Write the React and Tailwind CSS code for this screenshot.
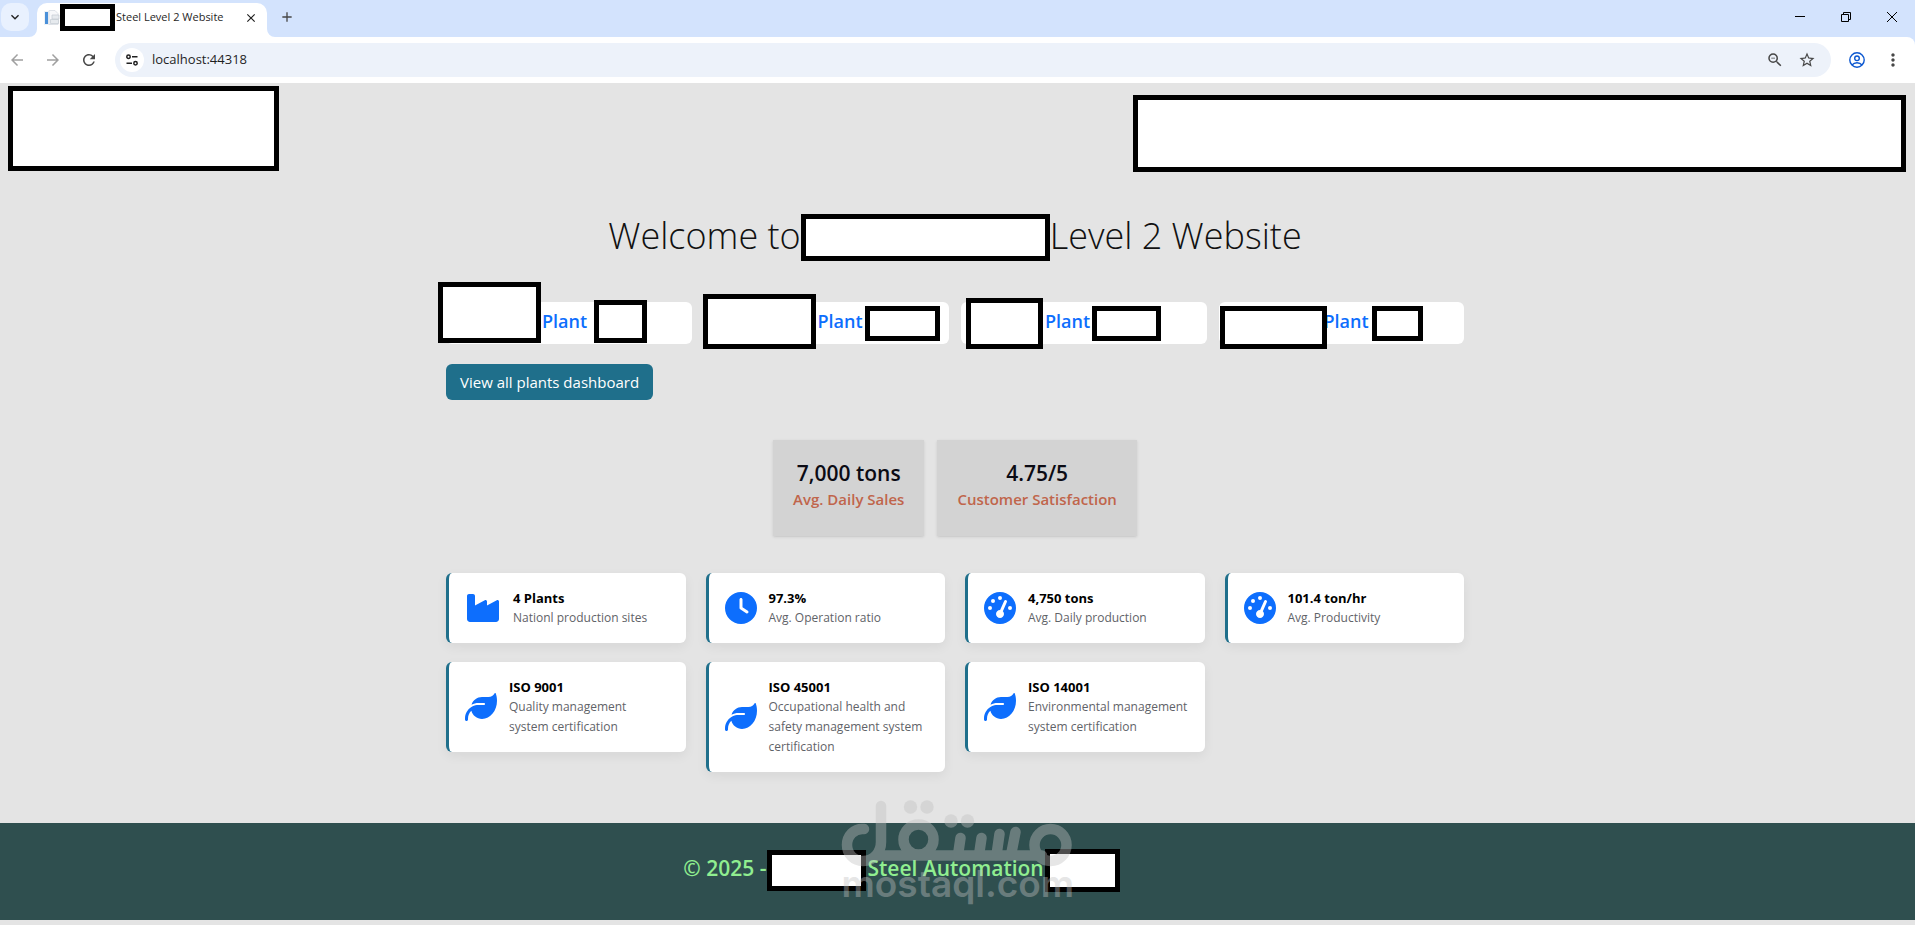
import React from "react";
import { FaIndustry, FaClock, FaGaugeHigh, FaLeaf } from "react-icons/fa6";
import {
  MdArrowBack,
  MdArrowForward,
  MdRefresh,
  MdClose,
  MdAdd,
  MdExpandMore,
  MdZoomOut,
  MdStarBorder,
  MdMoreVert,
} from "react-icons/md";

function Blank({ className }) {
  return <span aria-hidden="true" className={`block shrink-0 border-5 border-black bg-white ${className}`} />;
}

function Favicon() {
  return (
    <svg viewBox="0 0 16 16" className="size-4 shrink-0" aria-hidden="true">
      <rect x="0" y="1" width="9" height="14" fill="#eef2f6" />
      <rect x="1" y="2" width="3" height="12" fill="#4a90d9" />
      <path d="M5 .5h6l3 3v11H5z" fill="#f7f8fa" stroke="#d3d9df" strokeWidth=".7" />
      <path d="M8 5h7v4H8zM6.500 9.500h8v4h-8z" fill="#e6eaee" stroke="#c3cad1" strokeWidth=".7" />
    </svg>
  );
}

function TabStrip() {
  return (
    <div className="flex h-[37px] items-start bg-[#d3e3fd] text-[#1f1f1f]">
      <button aria-label="Search tabs" className="ml-px mt-[3px] flex size-7 items-center justify-center rounded-[10px] bg-[#e9f1fe]">
        <MdExpandMore className="size-4" />
      </button>
      <div className="mt-[3px] flex h-[34px] items-end">
        <svg viewBox="0 0 8 8" className="size-2" aria-hidden="true"><path d="M8 0v8H0a8 8 0 0 0 8-8z" fill="#fff" /></svg>
        <div className="flex h-full w-[230px] items-center rounded-t-[10px] bg-white pl-[7px] pr-2 pb-[5px]">
          <Favicon />
          <Blank className="h-[27px] w-[55px]" />
          <span className="ml-px flex-1 whitespace-nowrap text-[11px]">Steel Level 2 Website</span>
          <button aria-label="Close tab" className="flex size-4 items-center justify-center"><MdClose className="size-3.5" /></button>
        </div>
        <svg viewBox="0 0 8 8" className="size-2" aria-hidden="true"><path d="M0 0v8h8a8 8 0 0 1-8-8z" fill="#fff" /></svg>
      </div>
      <button aria-label="New tab" className="ml-1 mt-[9px] text-[#474747]"><MdAdd className="size-4" /></button>
      <div className="ml-auto mt-3 mr-[18px] flex gap-9">
        <button aria-label="Minimize"><svg viewBox="0 0 10 10" className="size-2.5"><path d="M0 4.500h10" stroke="#000" /></svg></button>
        <button aria-label="Restore"><svg viewBox="0 0 10 10" className="size-2.5" fill="none" stroke="#000"><path d="M.5 2.500h7v7h-7zM2.500 2.500v-2h7v7h-2" /></svg></button>
        <button aria-label="Close window"><svg viewBox="0 0 10 10" className="size-2.5"><path d="M0 0l10 10M10 0L0 10" stroke="#000" /></svg></button>
      </div>
    </div>
  );
}

function Toolbar() {
  return (
    <div className="bg-[#d3e3fd]">
      <div className="flex h-[46px] items-center rounded-tr-lg bg-white pl-2 pr-3 text-[#474747]">
        <button aria-label="Back" className="text-[#a0a0a0]"><MdArrowBack className="size-[18px]" /></button>
        <button aria-label="Forward" className="ml-[18px] text-[#a0a0a0]"><MdArrowForward className="size-[18px]" /></button>
        <button aria-label="Reload" className="ml-[18px]"><MdRefresh className="size-[18px]" /></button>
        <div className="ml-[17px] flex h-[34px] flex-1 items-center rounded-full bg-[#edf2fa] pl-[5px] pr-[15px]">
          <button aria-label="Site information" className="flex size-6 items-center justify-center rounded-full bg-white">
            <svg viewBox="0 0 12 12" className="size-3" fill="none" stroke="#1f1f1f" strokeWidth="1.500" aria-hidden="true">
              <circle cx="2.500" cy="2.700" r="1.700" /><path d="M6 2.700h5.500M.5 9.300H6" /><circle cx="9.500" cy="9.300" r="1.700" />
            </svg>
          </button>
          <input aria-label="Address" defaultValue="localhost:44318" className="ml-2 flex-1 bg-transparent text-[13px] text-[#1f1f1f] outline-none" />
          <button aria-label="Zoom"><MdZoomOut className="size-[18px]" /></button>
          <button aria-label="Bookmark" className="ml-3.5"><MdStarBorder className="size-[18px]" /></button>
        </div>
        <button aria-label="Profile" className="ml-[18px]">
          <svg viewBox="0 0 16 16" className="size-4" fill="none" stroke="#0b57d0" strokeWidth="1.400" aria-hidden="true">
            <circle cx="8" cy="8" r="7.200" /><circle cx="8" cy="6.300" r="2.300" /><path d="M3 13c1.300-1.600 3-2.300 5-2.300s3.700.7 5 2.300" />
          </svg>
        </button>
        <button aria-label="Menu" className="ml-[18px]"><MdMoreVert className="size-5" /></button>
      </div>
    </div>
  );
}

const plants = [
  { text: "pl-24", first: "-left-2 -top-5 h-[61px] w-[103px]", second: "left-[148px] -top-0.5 h-[43px] w-[53px]" },
  { text: "pl-[114px]", first: "-left-px -top-2 h-[55px] w-[113px]", second: "left-[161px] top-1 h-[35px] w-[75px]" },
  { text: "pl-[84px]", first: "left-[5px] -top-1 h-[51px] w-[77px]", second: "left-[131px] top-1 h-[35px] w-[69px]" },
  { text: "pl-[105px]", first: "left-px top-1 h-[43px] w-[107px]", second: "left-[153px] top-1 h-[35px] w-[51px]" },
];

const facts = [
  { Icon: FaIndustry, size: "w-9", title: "4 Plants", text: "Nationl production sites" },
  { Icon: FaClock, size: "w-8", title: "97.3%", text: "Avg. Operation ratio" },
  { Icon: FaGaugeHigh, size: "w-8", title: "4,750 tons", text: "Avg. Daily production" },
  { Icon: FaGaugeHigh, size: "w-8", title: "101.4 ton/hr", text: "Avg. Productivity" },
  { Icon: FaLeaf, size: "w-8", title: "ISO 9001", text: "Quality management\nsystem certification" },
  { Icon: FaLeaf, size: "w-8", title: "ISO 45001", text: "Occupational health and\nsafety management system certification" },
  { Icon: FaLeaf, size: "w-8", title: "ISO 14001", text: "Environmental management system certification" },
];

function Stat({ value, label }) {
  return (
    <div className="bg-[#d3d3d3] px-5 pt-[17px] pb-[27px] text-center font-semibold shadow-sm">
      <p className="text-[21px] leading-8 text-[#0b0b14]">{value}</p>
      <p className="text-[15px] leading-5 text-[#c0654b]">{label}</p>
    </div>
  );
}

function Watermark() {
  return (
    <div className="pointer-events-none absolute left-1/2 -top-[23px] -ml-[116px] w-[232px] opacity-40">
      <svg viewBox="0 0 232 66" className="block w-full overflow-visible" fill="none" stroke="#c1c1c1" strokeWidth="10.500" strokeLinecap="round" aria-hidden="true">
        <path d="M22 29C12 28 5 36 5 45C5 54 12 61 21 61C32 61 39 52 39 42V6" />
        <path d="M36 55.500H200" />
        <circle cx="208.500" cy="45" r="16" />
        <circle cx="76.500" cy="39.500" r="15" />
        <path d="M118.500 38L116 55M139.500 38L137 55M157.500 34L154.500 55M173.500 32L169 55" />
        <g fill="#c1c1c1" stroke="none">
          <circle cx="68.500" cy="7" r="6.700" />
          <circle cx="85" cy="7" r="6.700" />
          <circle cx="109" cy="21" r="6.700" />
          <circle cx="125.500" cy="21" r="6.700" />
        </g>
      </svg>
      <p className="text-center font-['Inter',sans-serif] text-[37px] leading-9 font-semibold text-[#c1c1c1]">mostaql.com</p>
    </div>
  );
}

export default function App() {
  return (
    <div className="min-h-screen bg-[#e4e4e4] font-['Open_Sans','Noto_Sans',sans-serif] text-[#111]">
      <TabStrip />
      <Toolbar />
      <header className="flex items-start justify-between pl-2 pr-[9px] pt-[3px]">
        <Blank className="h-[85px] w-[271px]" />
        <Blank className="mt-[9px] h-[77px] w-[773px]" />
      </header>
      <div className="pr-[5px]">
        <main className="mx-auto w-[1018px] max-w-full pb-[51px]">
          <h1 className="mt-[42px] flex h-[47px] items-center justify-center whitespace-nowrap text-4xl font-light">
            <span className="pb-1">Welcome to</span>
            <Blank className="h-[47px] w-[249px]" />
            <span className="pb-1">Level 2 Website</span>
          </h1>
          <nav aria-label="Plants" className="mt-[41px] grid grid-cols-4 gap-3">
            {plants.map((p, i) => (
              <a key={i} href="#plant" className={`relative h-[42px] rounded-md bg-white text-[18px] leading-[38px] font-semibold text-[#0d6efd] ${p.text}`}>
                Plant
                <Blank className={`absolute ${p.first}`} />
                <Blank className={`absolute ${p.second}`} />
              </a>
            ))}
          </nav>
          <button className="mt-5 block h-9 rounded-md bg-[#1f6f8b] px-3.5 text-[15px] text-white">View all plants dashboard</button>
          <section className="mt-10 flex justify-center gap-[13px]">
            <Stat value="7,000 tons" label="Avg. Daily Sales" />
            <Stat value="4.75/5" label="Customer Satisfaction" />
          </section>
          <section className="mt-[37px] grid grid-cols-4 items-start gap-x-5 gap-y-[19px]">
            {facts.map(({ Icon, size, title, text }) => (
              <div key={title} className="flex items-center gap-3 rounded-md border-l-3 border-[#1f6f8b] bg-white px-4 py-[15px] shadow-[0_4px_12px_rgba(0,0,0,0.06)]">
                <Icon className={`h-8 shrink-0 text-[#0d6efd] ${size}`} />
                <div className="leading-5">
                  <p className="text-[13px] leading-5 font-bold text-black">{title}</p>
                  <p className="text-[12px] leading-5 whitespace-pre-line text-[#5f6368]">{text}</p>
                </div>
              </div>
            ))}
          </section>
        </main>
      </div>
      <footer className="relative flex h-[97px] items-center justify-center bg-[#2f4f4f] pr-28 pb-[3px] text-[21px] font-semibold whitespace-nowrap text-[#90ee90]">
        <span className="pr-px pb-0.5">© 2025 -</span>
        <Blank className="h-[41px] w-[99px]" />
        <span className="px-px pb-0.5">Steel Automation</span>
        <Blank className="h-[43px] w-[75px]" />
        <Watermark />
      </footer>
    </div>
  );
}
